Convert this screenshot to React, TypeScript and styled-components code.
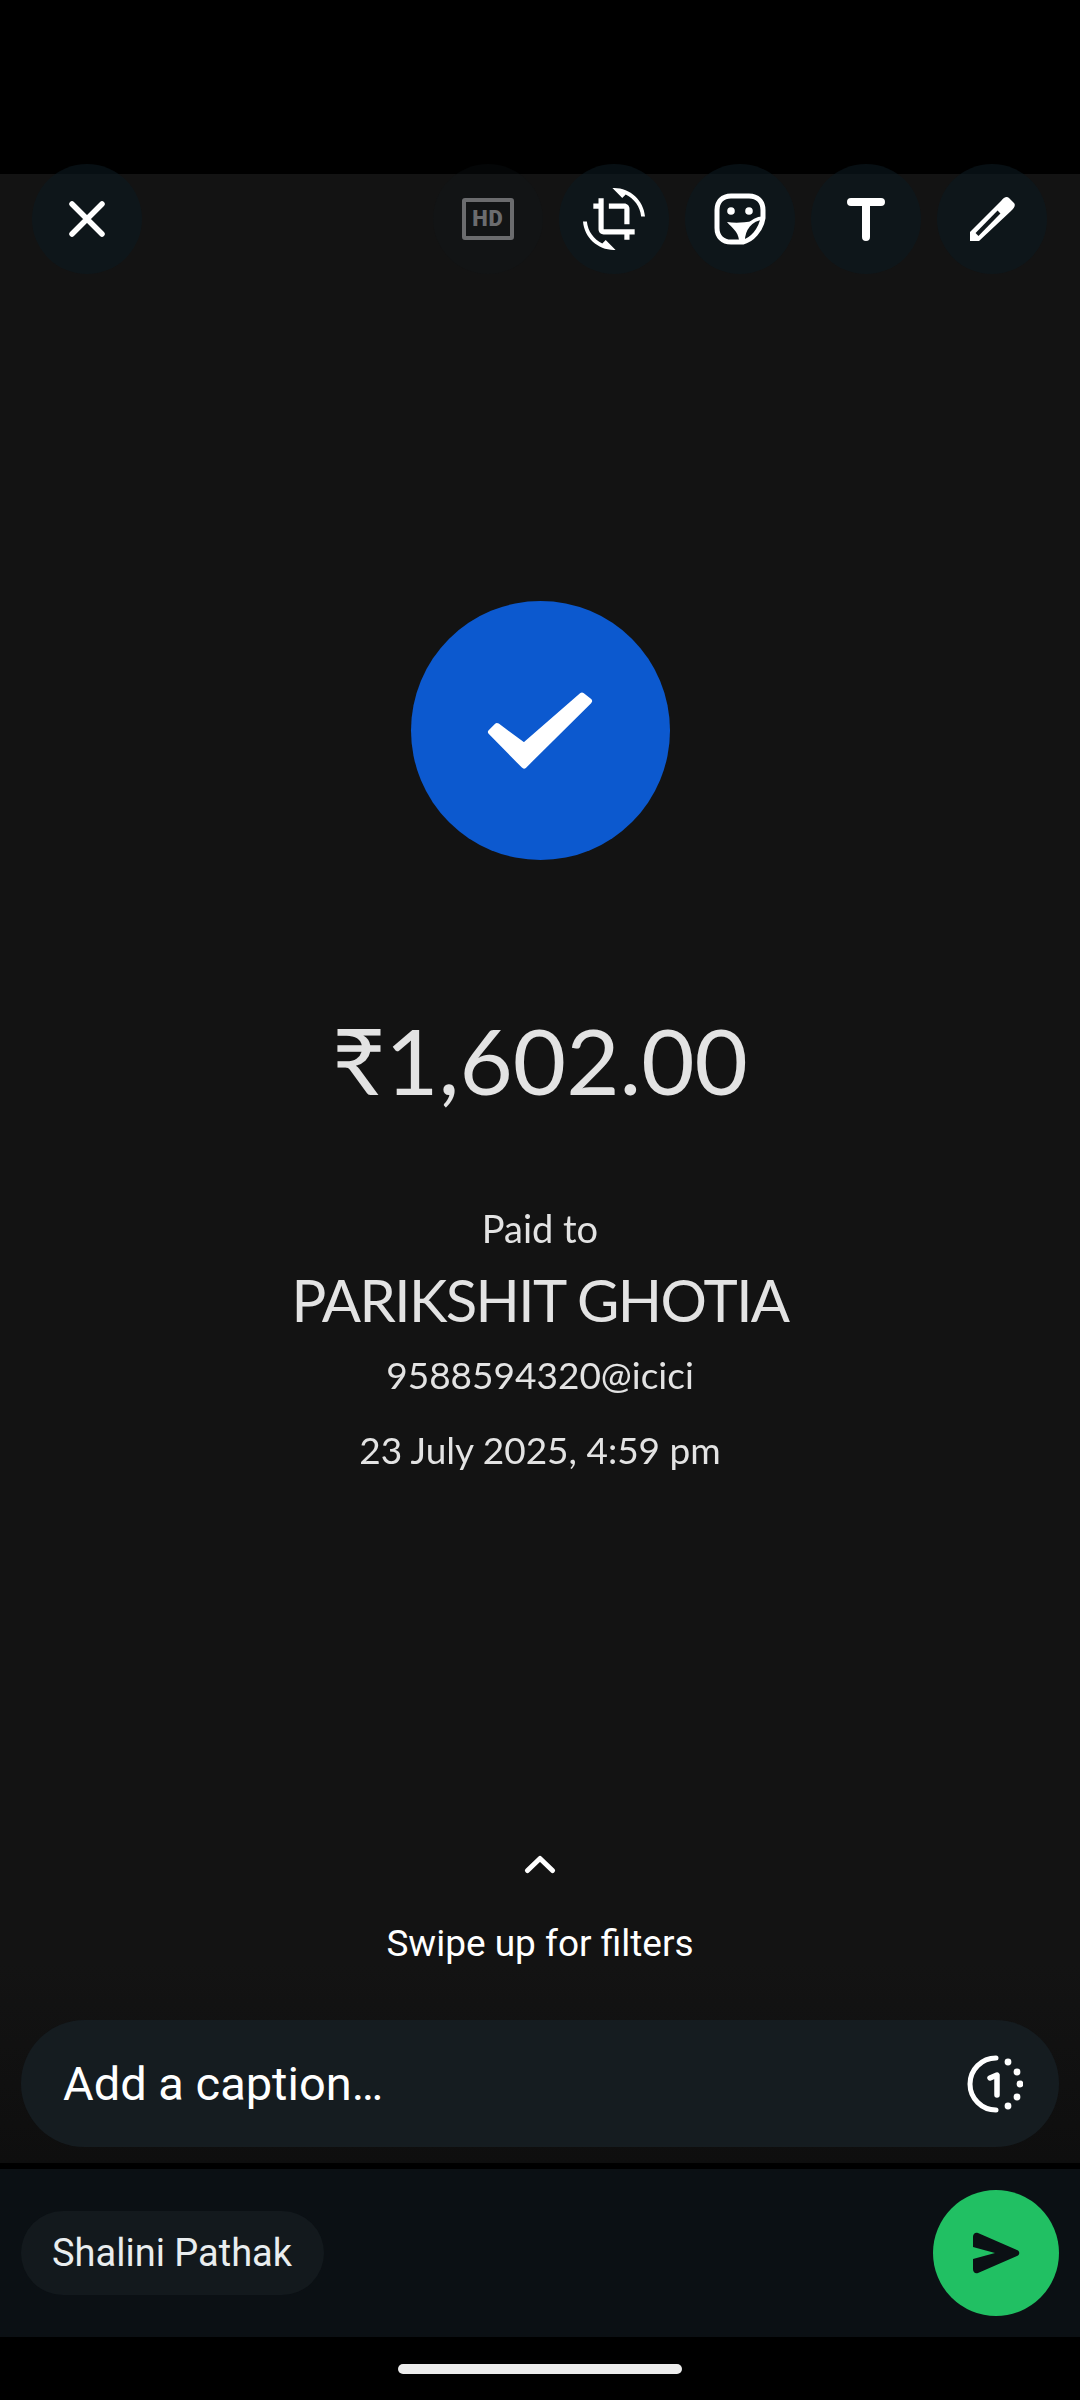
import styled, { createGlobalStyle } from 'styled-components';

const GlobalStyle = createGlobalStyle`
  html, body {
    margin: 0;
    padding: 0;
    background: #000;
  }
`;

const Screen = styled.div`
  width: 1080px;
  height: 2400px;
  background: #000;
  display: flex;
  flex-direction: column;
  overflow: hidden;
  font-family: Roboto, "Liberation Sans", sans-serif;
`;

const StatusArea = styled.div`
  height: 174px;
  flex: none;
`;

const Stage = styled.div`
  height: 1989px;
  flex: none;
  display: flex;
  flex-direction: column;
  background: linear-gradient(#131313 0, #131313 90%, #0e0e0e 100%);
`;

const Toolbar = styled.div`
  display: flex;
  align-items: center;
  gap: 16px;
  margin-top: -10px;
  padding: 0 33px 0 32px;
`;

const ToolButton = styled.div<{ $dim?: boolean }>`
  width: 110px;
  height: 110px;
  flex: none;
  border-radius: 50%;
  display: flex;
  align-items: center;
  justify-content: center;
  background: ${(p) => (p.$dim ? 'rgba(14, 24, 28, 0.25)' : 'rgba(12, 25, 31, 0.6)')};
`;

const ToolSpacer = styled.div`
  flex: 1;
`;

const HdBadge = styled.div`
  width: 52px;
  height: 42px;
  box-sizing: border-box;
  border: 4.5px solid #6b6c6e;
  border-radius: 3px;
  display: flex;
  align-items: center;
  justify-content: center;
  color: #6b6c6e;
  font-size: 22px;
  font-weight: 900;
  letter-spacing: 1px;
  line-height: 1;
`;

const Receipt = styled.div`
  margin-top: 327px;
  display: flex;
  flex-direction: column;
  align-items: center;
  color: #e3e3e3;
  font-family: Lato, "Noto Sans", sans-serif;
  filter: blur(0.5px);
`;

const PaidBadge = styled.div`
  width: 259px;
  height: 259px;
  border-radius: 50%;
  background: #0c59cf;
  display: flex;
  align-items: center;
  justify-content: center;
`;

const Amount = styled.div`
  margin-top: 145px;
  font-size: 92px;
  line-height: 110px;
`;

const PaidTo = styled.div`
  margin-top: 91px;
  font-size: 38px;
  line-height: 44px;
`;

const PayeeName = styled.div`
  margin-top: 14px;
  font-size: 58px;
  letter-spacing: -1.6px;
  line-height: 72px;
`;

const PayeeUpi = styled.div`
  margin-top: 16px;
  font-size: 37px;
  line-height: 46px;
`;

const PaidAt = styled.div`
  margin-top: 29px;
  font-size: 37px;
  line-height: 46px;
`;

const Hint = styled.div`
  margin-top: auto;
  display: flex;
  flex-direction: column;
  align-items: center;
  color: #fff;
`;

const HintText = styled.div`
  margin-top: 48px;
  font-size: 37px;
  line-height: 44px;
`;

const CaptionField = styled.div`
  margin: 54px 21px 16px;
  height: 127px;
  border-radius: 64px;
  background: #151c20;
  display: flex;
  align-items: center;
  justify-content: space-between;
  padding: 0 36px 0 42px;
  color: #fff;
  font-size: 47px;
`;

const RecipientBar = styled.div`
  margin-top: 6px;
  height: 168px;
  flex: none;
  background: #0b1014;
  display: flex;
  align-items: center;
  justify-content: space-between;
  padding: 0 21px;
`;

const RecipientChip = styled.div`
  height: 84px;
  padding: 0 32px 0 31px;
  border-radius: 42px;
  background: #13191d;
  display: flex;
  align-items: center;
  color: #e9edef;
  font-size: 38px;
`;

const SendButton = styled.div`
  width: 126px;
  height: 126px;
  border-radius: 50%;
  background: #21c063;
  display: flex;
  align-items: center;
  justify-content: center;
`;

const NavArea = styled.div`
  flex: 1;
  display: flex;
  justify-content: center;
  padding-top: 27px;
`;

const HomeIndicator = styled.div`
  width: 284px;
  height: 10px;
  border-radius: 5px;
  background: #ececec;
`;

export default function App() {
  return (
    <Screen>
      <GlobalStyle />
      <StatusArea />
      <Stage>
        <Toolbar>
          <ToolButton>
            <svg width="36" height="36" viewBox="0 0 36 36" fill="none" stroke="#fff" strokeWidth="5.5" strokeLinecap="round">
              <path d="M3 3l30 30M33 3L3 33" />
            </svg>
          </ToolButton>
          <ToolSpacer />
          <ToolButton $dim>
            <HdBadge>HD</HdBadge>
          </ToolButton>
          <ToolButton>
            <svg width="62" height="62" viewBox="0 0 24 24" fill="#fff">
              <path d="M7.47 21.49C4.2 19.93 1.86 16.76 1.5 13H0c.51 6.16 5.66 11 11.95 11 .23 0 .44-.02.66-.03L8.8 20.15l-1.33 1.34zM12.05 0c-.23 0-.44.02-.66.04l3.81 3.81 1.33-1.33C19.8 4.07 22.14 7.24 22.5 11H24c-.51-6.16-5.66-11-11.95-11zM16 14h2V8c0-1.11-.9-2-2-2h-6v2h6v6zm-8 2V4H6v2H4v2h2v8c0 1.1.89 2 2 2h8v2h2v-2h2v-2H8z" />
            </svg>
          </ToolButton>
          <ToolButton>
            <svg width="52" height="52" viewBox="0 0 52 52" fill="none" stroke="#fff" strokeWidth="5" strokeLinejoin="round" strokeLinecap="round">
              <path d="M49 25V17C49 8.500 43.500 3 35 3H17C8.500 3 3 8.500 3 17V35C3 43.500 8.500 49 17 49H29C38 47 47 37 49 25Z" />
              <path d="M49 25C37 26 29 36 29 49" strokeWidth="3.500" />
              <circle cx="17" cy="18" r="3.800" fill="#fff" stroke="none" />
              <circle cx="35" cy="18" r="3.800" fill="#fff" stroke="none" />
              <path d="M13 29C20 30 29 30 39 28C33 32 29 38 28 47L25 47C24 38 18 35 13 29Z" fill="#fff" stroke="none" />
            </svg>
          </ToolButton>
          <ToolButton>
            <svg width="38" height="44" viewBox="0 0 38 44" fill="none" stroke="#fff" strokeWidth="8" strokeLinecap="round">
              <path d="M4 5h30M19 5v35" />
            </svg>
          </ToolButton>
          <ToolButton>
            <svg width="46" height="46" viewBox="0 0 46 46" fill="#fff">
              <path d="M1 45V36L32 5C35 1 38 0 40 2L45 7C47 9 45 12 42 15L10 45Z" />
              <path d="M8 38.500L30 16" fill="none" stroke="#11181c" strokeWidth="4" />
            </svg>
          </ToolButton>
        </Toolbar>

        <Receipt>
          <PaidBadge>
            <svg width="106" height="79" viewBox="0 0 106 79" fill="#fff" stroke="#fff" strokeWidth="6" strokeLinejoin="round">
              <path d="M4 41L10 35L37 55L95 4.500L102 10L37 74.500Z" />
            </svg>
          </PaidBadge>
          <Amount>₹1,602.00</Amount>
          <PaidTo>Paid to</PaidTo>
          <PayeeName>PARIKSHIT GHOTIA</PayeeName>
          <PayeeUpi>9588594320@icici</PayeeUpi>
          <PaidAt>23 July 2025, 4:59 pm</PaidAt>
        </Receipt>

        <Hint>
          <svg width="32" height="20" viewBox="0 0 32 20" fill="none" stroke="#fff" strokeWidth="5" strokeLinecap="round" strokeLinejoin="round">
            <path d="M3.500 16.500L16 4.500L28.500 16.500" />
          </svg>
          <HintText>Swipe up for filters</HintText>
        </Hint>

        <CaptionField>
          <span>Add a caption…</span>
          <svg width="56" height="58" viewBox="0 0 56 58" fill="none" stroke="#fff" strokeLinecap="round" strokeLinejoin="round">
            <path d="M29 3A26 26 0 0 0 29 55" strokeWidth="5" />
            <path d="M23 23L30 20V40" strokeWidth="5.500" />
            <g fill="#fff" stroke="none">
              <circle cx="41" cy="7" r="3.400" />
              <circle cx="50" cy="17" r="3.400" />
              <circle cx="53" cy="29" r="3.400" />
              <circle cx="50" cy="42" r="3.400" />
              <circle cx="41" cy="51" r="3.400" />
            </g>
          </svg>
        </CaptionField>
      </Stage>

      <RecipientBar>
        <RecipientChip>Shalini Pathak</RecipientChip>
        <SendButton>
          <svg width="48" height="42" viewBox="0 0 48 42" fill="#0b1014">
            <path d="M1 5C1 2 3 0 6 1L45 18C48 19 48 23 45 24L6 41C3 42 1 40 1 37V27L23 21L1 15Z" />
          </svg>
        </SendButton>
      </RecipientBar>
      <NavArea>
        <HomeIndicator />
      </NavArea>
    </Screen>
  );
}
